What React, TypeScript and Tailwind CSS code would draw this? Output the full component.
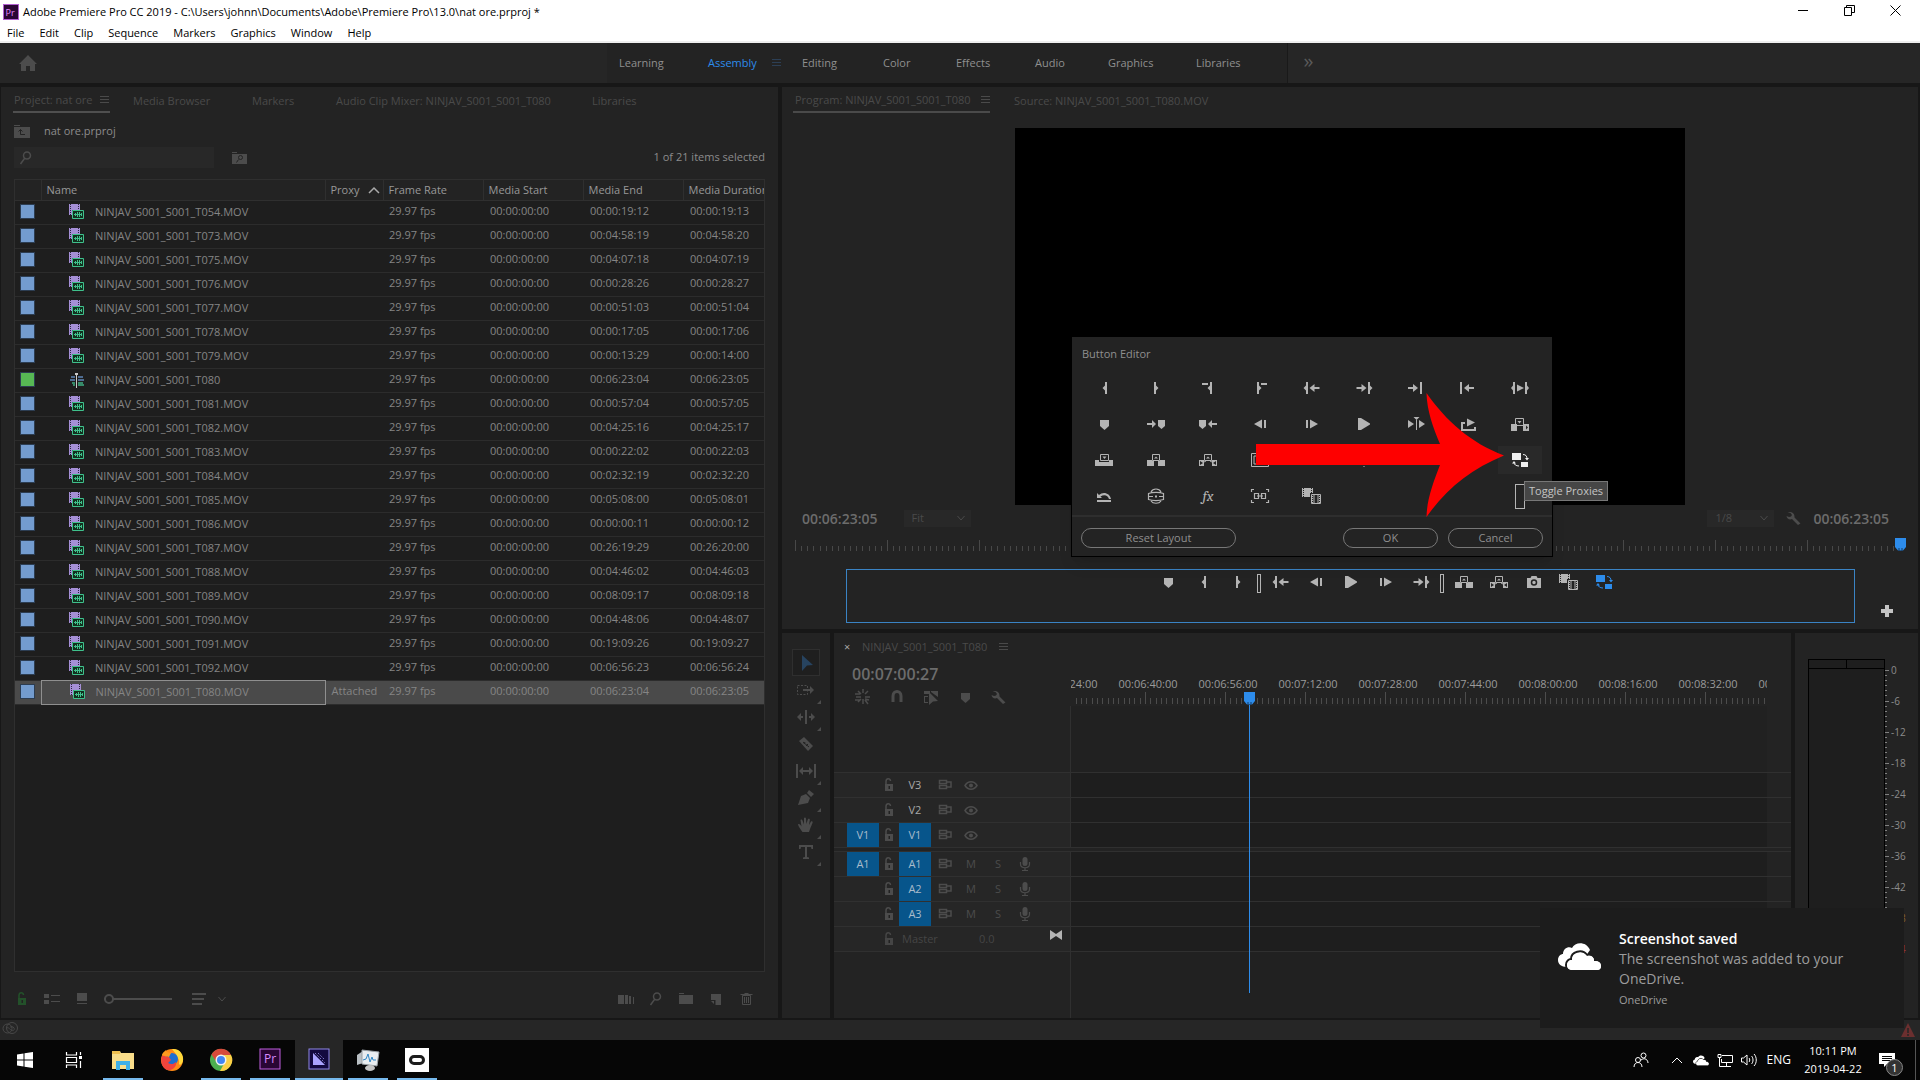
import React from "react";
import clsx from "clsx";

const clips = [
  ["T054.MOV", "00:00:19:12", "00:00:19:13"],
  ["T073.MOV", "00:04:58:19", "00:04:58:20"],
  ["T075.MOV", "00:04:07:18", "00:04:07:19"],
  ["T076.MOV", "00:00:28:26", "00:00:28:27"],
  ["T077.MOV", "00:00:51:03", "00:00:51:04"],
  ["T078.MOV", "00:00:17:05", "00:00:17:06"],
  ["T079.MOV", "00:00:13:29", "00:00:14:00"],
  ["T080", "00:06:23:04", "00:06:23:05"],
  ["T081.MOV", "00:00:57:04", "00:00:57:05"],
  ["T082.MOV", "00:04:25:16", "00:04:25:17"],
  ["T083.MOV", "00:00:22:02", "00:00:22:03"],
  ["T084.MOV", "00:02:32:19", "00:02:32:20"],
  ["T085.MOV", "00:05:08:00", "00:05:08:01"],
  ["T086.MOV", "00:00:00:11", "00:00:00:12"],
  ["T087.MOV", "00:26:19:29", "00:26:20:00"],
  ["T088.MOV", "00:04:46:02", "00:04:46:03"],
  ["T089.MOV", "00:08:09:17", "00:08:09:18"],
  ["T090.MOV", "00:04:48:06", "00:04:48:07"],
  ["T091.MOV", "00:19:09:26", "00:19:09:27"],
  ["T092.MOV", "00:06:56:23", "00:06:56:24"],
  ["T080.MOV", "00:06:23:04", "00:06:23:05"],
];

// Glyphs are drawn on a 20x16 grid, filled with the current colour
const glyphs: Record<string, React.ReactNode> = {
  markIn: <path d="M11 2h2v12h-2v-3.500L8.500 8 11 5.500z" />,
  markOut: <path d="M8 2h2v3.500L12.500 8 10 10.500V14H8z" />,
  splitIn: <path d="M4 3h6v2H4zM12 2h2v12h-2v-3.500L9.500 8 12 5.500z" />,
  splitOut: <path d="M11 3h6v2h-6zM7 2h2v3.500L11.500 8 9 10.500V14H7z" />,
  goIn: <path d="M4 2h2v12H4v-3.500L1.500 8 4 5.500zM7.500 8l5-4v3h5v2h-5v3z" />,
  goOut: <path d="M16 2h-2v12h2v-3.500L18.500 8 16 5.500zM12.500 8l-5-4v3h-5v2h5v3z" />,
  nextEdit: <path d="M12 8L7 4v3H2v2h5v3zM14 2h2v12h-2z" />,
  prevEdit: <path d="M2 2h2v12H2zM6 8l5-4v3h5v2h-5v3z" />,
  playInOut: (
    <path d="M3 2h2v12H3v-3.500L1 8l2-2.500zM7 4.500l7 3.500-7 3.500zM15 2h2v3.500L19 8l-2 2.500V14h-2z" />
  ),
  marker: <path d="M6 4h9v6l-4.500 4L6 10z" />,
  nextMarker: <path d="M10 8L6 4v3H1v2h5v3zM12 4h7v6l-3.500 3L12 10z" />,
  prevMarker: <path d="M1 4h7v6l-3.500 3L1 10zM10 8l4-4v3h5v2h-5v3z" />,
  stepBack: <path d="M4 8l8-4.500v9zM14 4h2v8h-2z" />,
  stepFwd: <path d="M4 4h2v8H4zM8 3.500L16 8l-8 4.500z" />,
  play: <path d="M4 2h3l9 5.500v1L7 14H4z" />,
  playAround: <path d="M2 4l6 4-6 4zM13 4l6 4-6 4zM7.500 1h6l-3 3zM10 4h1v10h-1z" />,
  loop: <path d="M3 6h4v2H5v5h11v-2h2v4H3zM9 2.500l8 4-8 4z" />,
  insert: (
    <>
      <path d="M1 8h6v7H1zM13 8h6v7h-6z" />
      <path d="M5.500 2.500h8v7h-8z" fill="none" stroke="currentColor" />
      <path d="M7.500 5h4l-2 2.500z" />
      <path d="M16 9.500l2 2-2 2z" fill="#232323" />
    </>
  ),
  overwrite: (
    <>
      <path d="M1 8h4v2h10V8h4v6H1z" />
      <path d="M6.500 2.500h8v6h-8z" fill="none" stroke="currentColor" />
      <path d="M8.500 4.500h4l-2 2.500z" />
    </>
  ),
  lift: (
    <>
      <path d="M1 8h5v6H1zM14 8h5v6h-5zM6 9h2v5H6zM12 9h2v5h-2z" />
      <path d="M6.500 2.500h7v6h-7z" fill="none" stroke="currentColor" />
      <path d="M8 6.500h4L10 4.500z" />
    </>
  ),
  extract: (
    <>
      <path d="M1 8h5v6H1zM14 8h5v6h-5z" />
      <path d="M6.500 2.500h7v6h-7zM6 10l2-1M14 10l-2-1" fill="none" stroke="currentColor" />
      <path d="M8 6.500h4L10 4.500z" />
      <path d="M2 9l3 2-3 2zM18 9l-3 2 3 2z" fill="#232323" />
    </>
  ),
  safe: (
    <path d="M1.500 1.500h17v13h-17zM4 4h12v8H4z" fill="none" stroke="currentColor" />
  ),
  caret: <path d="M9 14h2l-1 1z" />,
  proxies: (
    <>
      <path d="M2 1h9v7H2zM11 10h7v5h-7z" />
      <path d="M13 2.500c3 0 4 2 4 4M4 10.500c0 2 2 3.500 5 3.500" fill="none" stroke="currentColor" />
      <path d="M15 6h4l-2 2.500zM2 11.500L4 9l2 2.500z" />
    </>
  ),
  undo: <path d="M3 5v5h5L6.500 8.500C10 6 14 7 15 11h2C16 5 9 3 5 7zM3 12h14v2H3z" />,
  vr: (
    <>
      <path d="M2.500 5.500c4-1.500 11-1.500 15 0v6c-4 1.500-11 1.500-15 0zM5 4c2-4 8-4 10 0M5 13c2 3 8 3 10 0M3 8.500h4M13 8.500h4" fill="none" stroke="currentColor" strokeWidth="1.200" />
      <path d="M9 7.500h2v2H9z" />
    </>
  ),
  link: (
    <path d="M1.500 4V1.500H4M16 1.500h2.500V4M1.500 12v2.500H4M16 14.500h2.500V12M4.500 5.500h4v5h-4zM11.500 5.500h4v5h-4zM7 8h6" fill="none" stroke="currentColor" strokeWidth="1.200" />
  ),
  compare: (
    <>
      <path d="M0 0h11v5H8v4H0z" />
      <path d="M1.500 0v9M9.500 0v5" stroke="#232323" strokeDasharray="1 1" fill="none" />
      <path d="M9.500 6.500h9v9h-9z" fill="none" stroke="currentColor" />
      <path d="M12 6.500v9M16 6.500v9" stroke="currentColor" />
      <path d="M10.500 8v7M17.500 8v7" stroke="currentColor" strokeDasharray="1 1" />
    </>
  ),
  camera: (
    <>
      <path d="M3 4h3.500l1-2h5l1 2H17v10H3z" />
      <circle cx="10" cy="8.500" r="2.500" fill="none" stroke="#232323" strokeWidth="1.500" />
    </>
  ),
  wrench: (
    <path d="M3.500 2.500l3 .5 1.500 2-1 1.500-2 .500-2.500-1C3 9 5.500 10 8 9l6 6 2.500-1.500L10.500 7.500C11 4 8 .5 3.500 2.500z" />
  ),
  chevron: <path d="M6.500 6l3.500 4 3.500-4" fill="none" stroke="currentColor" />,
  lock: (
    <>
      <path d="M6 7h8v7H6z" />
      <path d="M7 7V4.500c0-3.500 4.500-3.500 4.500-.5" fill="none" stroke="currentColor" strokeWidth="1.500" />
      <path d="M9.500 9H11v3H9.500z" fill="#222" />
    </>
  ),
  sync: (
    <path d="M4.500 3.500h7v3h-7zM4.500 8.500h7v3h-7zM12 5h4v5h-4" fill="none" stroke="currentColor" strokeWidth="1.500" />
  ),
  eye: (
    <>
      <path d="M4 8.500c3-5 9-5 12 0-3 5-9 5-12 0z" fill="none" stroke="currentColor" strokeWidth="1.500" />
      <circle cx="10" cy="8.500" r="2" />
    </>
  ),
  mic: (
    <>
      <rect x="7.500" y="1" width="5" height="9" rx="2.500" />
      <path d="M5.500 6v2c0 5 9 5 9 0V6M10 12v2.500M7 14.500h6" fill="none" stroke="currentColor" strokeWidth="1.200" />
    </>
  ),
  search: (
    <path d="M14.500 5.500a3.500 3.500 0 1 1-7 0 3.500 3.500 0 0 1 7 0zM8.500 8.500L4.500 14" fill="none" stroke="currentColor" strokeWidth="1.500" />
  ),
  folder: <path d="M3 2h5v1H3zM3 4h14v9H3z" />,
  folderUp: (
    <>
      <path d="M2 2h6v1H2zM2 4h16v11H2z" />
      <path d="M8.500 6.500v5H13M6.500 8.500l2-2 2 2" fill="none" stroke="#232323" />
    </>
  ),
  folderSearch: (
    <>
      <path d="M2 2h5v1H2zM2 4h15v10H2z" />
      <path d="M12.500 7.500a2 2 0 1 1-4 0 2 2 0 0 1 4 0zM8.500 9.500l-2 3" fill="none" stroke="#232323" />
    </>
  ),
  listView: <path d="M2 3h5v4H2zM9 4h9v1H9zM2 9h5v4H2zM9 10h9v1H9z" />,
  iconView: <path d="M5 2h10v8H5zM5 12h10v1H5z" />,
  sort: <path d="M3 2h14v2H3zM3 7h12v2H3zM3 12h10v2H3z" />,
  automate: <path d="M2 4h6v9H2zM9 4h3v9H9zM13 5h2v8h-2zM17 6h1v7h-1z" />,
  newItem: <path d="M5 3h10v11H9.500V9H5zM5 10h3v3z" />,
  trash: (
    <path d="M6.500 4.500h8v9h-8zM4.500 3.500h12M8.500 2.500h4M8.500 6v6M10.500 6v6M12.500 6v6" fill="none" stroke="currentColor" />
  ),
  hamburger: <path d="M5 4h9v1H5zM5 7h9v1H5zM5 10h9v1H5z" />,
  select: <path d="M6 0l11 10-6 .5L6 16z" />,
  trackSelect: (
    <>
      <path d="M1.500 3.500h10v9h-10z" fill="none" stroke="currentColor" strokeDasharray="2 1.500" />
      <path d="M7 7h7V4l4 4-4 4V9H7z" />
    </>
  ),
  ripple: <path d="M9 1h2v14H9zM7 7v2H5v3L1 8l4-4v3zM13 7v2h2v3l4-4-4-4v3z" />,
  razor: (
    <>
      <path d="M3 5l5-4 9 9-5 5z" />
      <path d="M7 6l6 5M8 8l1-2M10 10l2-2" stroke="#222" fill="none" />
    </>
  ),
  slip: <path d="M0 1h2v14H0zM18 1h2v14h-2zM7 7h6V4l4 4-4 4V9H7v3L3 8l4-4z" />,
  pen: <path d="M2 15l3-9 5-2 4 4-2 5zM11 3l2-3 5 4-3 3z" />,
  hand: (
    <path d="M6.500 15C4 12 2.500 9 2 7.500c1-1 2.500 0 3.500 2L4.500 3c1-1 2 0 2.200 1L8 7.500 8 1c.8-1 1.800-.5 2 .5l.3 5.500L12 2c1-.5 2 0 1.800 1l-.8 5 2-3.500c1.500-.5 2 .5 1.500 1.500L14 12l-1 3z" />
  ),
  type: <path d="M3 1h14v4h-1.500L15 3h-4v10l2 .5V15H7v-1.500l2-.5V3H5l-.5 2H3z" />,
  nest: (
    <path d="M10 0v4M3 8h5M12 8h5M5 2l3 3M15 2l-3 3M5 13l3-3M2 5h5M2 11h5M12 10l4 1M10 10v5M12 11l3 4" fill="none" stroke="currentColor" strokeWidth="1.500" />
  ),
  magnet: (
    <path d="M6 13V7c0-6 8-6 8 0v6" fill="none" stroke="currentColor" strokeWidth="3" />
  ),
  linked: <path d="M3 2h6v3H3zM10 2h7v6l-7-5zM3 7h4v1H4v5h3v1H3zM8 3l9 9-5 .5L8 16z" />,
  collapse: <path d="M4 3l6 4 6-4v10l-6-4-6 4z" />,
  plus: <path d="M8 2h4v4h4v4h-4v4H8v-4H4V6h4z" />,
  home: <path d="M10 0L1 9h2v7h5v-5h4v5h5V9h2z" />,
};

const Glyph = ({ name, className }: { name: string; className?: string }) => (
  <svg viewBox="0 0 20 16" className={clsx("h-4 w-5 shrink-0", className)} fill="currentColor" aria-hidden="true">
    {glyphs[name]}
  </svg>
);

const IconButton = ({ name, label, className }: { name: string; label: string; className?: string }) => (
  <button aria-label={label} className={clsx("flex items-center justify-center", className)}>
    <Glyph name={name} />
  </button>
);

const ClipIcon = () => (
  <svg viewBox="0 0 16 16" className="h-4 w-4 shrink-0" aria-hidden="true">
    <path d="M0 0h11v6H3v5H0z" fill="#a58fd6" />
    <path d="M1.500 0v11M9.500 0v6" stroke="#2b2440" strokeDasharray="1 1" />
    <path d="M3.500 6.500h11v8h-11z" fill="#12301f" stroke="#3fc08c" />
    <path d="M5 10.500h8M6.500 9v3M8.500 8v5M10.500 8v5M12.500 9v3" stroke="#3fc08c" />
  </svg>
);

const SequenceIcon = () => (
  <svg viewBox="0 0 16 16" className="h-4 w-4 shrink-0" aria-hidden="true">
    <path d="M2 5h4M9 5h5M1 8h5M9 8h6" stroke="#5f86b8" strokeWidth="1.500" />
    <path d="M3 11h3M9 11h5M4 13h2M9 13h6" stroke="#3fae83" strokeWidth="1.500" />
    <path d="M7.500 3v13" stroke="#c8c8c8" />
    <path d="M6 1h3v2H6z" fill="#c8c8c8" />
  </svg>
);

const CloudIcon = ({ className, cut }: { className?: string; cut: string }) => (
  <svg viewBox="0 0 44 28" className={className} aria-hidden="true">
    <path d="M9 24C3 24 0 21 0 17c0-4 3-6 5-6 0-5 5-8 9-6 3-6 14-7 18 2L20 24z" fill="#fff" />
    <path d="M15 28c-5 0-7-3-7-6 0-4 3-6 5-6 0-7 11-11 16-4 5-1 8 2 8 5 5 0 7 3 7 6 0 3-2 5-5 5z" fill="#fff" stroke={cut} strokeWidth="2" />
    <path d="M15 27c-4 0-6-2-6-5 0-3 3-5 5-5 0-7 10-10 15-4 4-1 7 1 7 5 4 0 7 2 7 5s-2 4-4 4z" fill="#fff" />
  </svg>
);

const TitleBar = () => (
  <header className="bg-white text-black">
    <div className="flex h-6 items-center pr-0.5 pl-[3px]">
      <svg viewBox="0 0 16 16" className="h-4 w-4">
        <rect x=".5" y=".5" width="15" height="15" fill="#2a0634" stroke="#b15fd0" />
        <text x="2.500" y="11.500" fontSize="9" fill="#e38cff" fontFamily="Open Sans, sans-serif">Pr</text>
      </svg>
      <h1 className="ml-1 flex-1 text-[11px]">
        Adobe Premiere Pro CC 2019 - C:\Users\johnn\Documents\Adobe\Premiere Pro\13.0\nat ore.prproj *
      </h1>
      <div className="flex h-5 items-center self-start">
        <button aria-label="Minimize" className="flex w-[46px] justify-center">
          <svg viewBox="0 0 11 11" className="h-[11px] w-[11px]"><path d="M0 5.500h10" stroke="#000" /></svg>
        </button>
        <button aria-label="Restore" className="flex w-[46px] justify-center">
          <svg viewBox="0 0 11 11" className="h-[11px] w-[11px]">
            <path d="M.5 2.500h7v8h-7zM2.500 2V.5h8v7H8" fill="none" stroke="#000" />
          </svg>
        </button>
        <button aria-label="Close" className="flex w-[46px] justify-center">
          <svg viewBox="0 0 11 11" className="h-[11px] w-[11px]"><path d="M.5.5l10 10M10.500.5l-10 10" stroke="#000" /></svg>
        </button>
      </div>
    </div>
    <nav className="flex h-[19px] gap-[15px] border-b-2 border-[#eee] pl-[7px] text-[11px] leading-4">
      {["File", "Edit", "Clip", "Sequence", "Markers", "Graphics", "Window", "Help"].map((item) => (
        <button key={item}>{item}</button>
      ))}
    </nav>
  </header>
);

const Workspaces = () => (
  <nav className="flex h-10 items-center bg-[#262626] text-[11px] text-[#8f8f8f]">
    <button aria-label="Home" className="ml-[18px] text-[#4c4c4c]">
      <Glyph name="home" />
    </button>
    <div className="ml-[569px] flex h-full items-center border-r border-[#191919] bg-[#232323] pr-[46px]">
      <button className="w-[101px] pl-3 text-left">Learning</button>
      <button className="w-[63px] text-left text-[#2d8ceb]">Assembly</button>
      <Glyph name="hamburger" className="mr-[15px] -ml-1 text-[#2c3f55]" />
      <button className="w-[81px] text-left">Editing</button>
      <button className="w-[73px] text-left">Color</button>
      <button className="w-[79px] text-left">Effects</button>
      <button className="w-[73px] text-left">Audio</button>
      <button className="w-[88px] text-left">Graphics</button>
      <button className="text-left">Libraries</button>
    </div>
    <button aria-label="More workspaces" className="ml-4 pb-1 text-[20px] leading-none text-[#5a5a5a]">»</button>
  </nav>
);

const ProjectPanel = () => (
  <section className="flex min-w-0 flex-col bg-[#232323] px-[13px] text-[11px]">
    <div className="flex h-[26px] pt-0.5 text-[#4a4a4a]">
      <button className="-ml-px flex w-[97px] items-center justify-between border-b-2 border-[#4f4f4f] pl-px">
        Project: nat ore
        <Glyph name="hamburger" className="-mr-[5px]" />
      </button>
      <button className="ml-[23px] w-[119px] text-left">Media Browser</button>
      <button className="w-[84px] text-left">Markers</button>
      <button className="w-[256px] text-left">Audio Clip Mixer: NINJAV_S001_S001_T080</button>
      <button>Libraries</button>
    </div>
    <div className="mt-[7px] flex h-[22px] items-center text-[#8c8c8c]">
      <Glyph name="folderUp" className="-ml-0.5 text-[#4c4c4c]" />
      <span className="ml-3">nat ore.prproj</span>
    </div>
    <div className="mt-[5px] flex h-[21px] items-center">
      <label className="flex h-full w-[200px] items-center bg-[#282828] pl-0.5 text-[#4c4c4c]">
        <Glyph name="search" />
        <input aria-label="Search project" className="w-full bg-transparent outline-none" />
      </label>
      <IconButton name="folderSearch" label="New search bin" className="ml-4 text-[#4c4c4c]" />
      <span className="ml-auto text-[#8c8c8c]">1 of 21 items selected</span>
    </div>
    <div className="mt-[11px] flex-1 overflow-hidden border border-[#2f2f2f] bg-[#1e1e1e]">
      <table className="w-full table-fixed border-collapse text-left text-[#858585]">
        <colgroup>
          <col className="w-[26px]" />
          <col />
          <col className="w-[58px]" />
          <col className="w-[100px]" />
          <col className="w-[100px]" />
          <col className="w-[100px]" />
          <col className="w-[81px]" />
        </colgroup>
        <thead className="bg-[#232323] text-[#989898]">
          <tr className="h-5 border-b border-[#2f2f2f]">
            <th />
            <th className="border-l border-[#2f2f2f] pl-[5px] font-normal">Name</th>
            <th className="border-l border-[#2f2f2f] pl-[5px] font-normal">
              <span className="flex items-center justify-between">
                Proxy
                <svg viewBox="0 0 12 8" className="mr-[3px] h-2 w-3"><path d="M1 7l5-5 5 5" fill="none" stroke="#aaa" strokeWidth="1.500" /></svg>
              </span>
            </th>
            <th className="border-l border-[#2f2f2f] pl-[5px] font-normal">Frame Rate</th>
            <th className="border-l border-[#2f2f2f] pl-[5px] font-normal">Media Start</th>
            <th className="border-l border-[#2f2f2f] pl-[5px] font-normal">Media End</th>
            <th className="overflow-hidden border-l border-[#2f2f2f] pl-[5px] font-normal whitespace-nowrap">Media Duration</th>
          </tr>
        </thead>
        <tbody>
          {clips.map(([name, end, duration], i) => {
            const selected = i === clips.length - 1;
            const sequence = name === "T080";
            return (
              <tr key={i} className={clsx("h-6 border-b border-[#2c2c2c]", selected && "bg-[#4a4a4a]")}>
                <td className="pb-0.5 pl-[5px]">
                  <div className={clsx("h-[15px] w-[15px] border border-[#2c3d52]", sequence ? "bg-[#57b854]" : "bg-[#739ccf]")} />
                </td>
                <td className={clsx(selected && "border border-[#8f8f8f]")}>
                  <div className="flex items-center pl-[28px]">
                    {sequence ? <SequenceIcon /> : <ClipIcon />}
                    <span className="ml-[10px]">NINJAV_S001_S001_{name}</span>
                  </div>
                </td>
                <td className="pb-0.5 pl-[6px]">{selected && "Attached"}</td>
                <td className="pb-0.5 pl-[6px]">29.97 fps</td>
                <td className="pb-0.5 pl-[7px]">00:00:00:00</td>
                <td className="pb-0.5 pl-[7px]">{end}</td>
                <td className="pb-0.5 pl-[7px]">{duration}</td>
              </tr>
            );
          })}
        </tbody>
      </table>
    </div>
    <div className="flex h-[46px] items-center pt-[7px] text-[#4c4c4c]">
      <IconButton name="lock" label="Toggle project lock" className="-ml-0.5 text-[#23512a]" />
      <IconButton name="listView" label="List view" className="ml-[10px]" />
      <IconButton name="iconView" label="Icon view" className="ml-[10px]" />
      <input
        type="range"
        aria-label="Zoom"
        defaultValue={0}
        className="ml-3 h-[10px] w-[68px] appearance-none bg-transparent [&::-webkit-slider-runnable-track]:h-[10px] [&::-webkit-slider-runnable-track]:bg-[linear-gradient(transparent_4px,#4c4c4c_4px,#4c4c4c_6px,transparent_6px)] [&::-webkit-slider-thumb]:h-[10px] [&::-webkit-slider-thumb]:w-[10px] [&::-webkit-slider-thumb]:appearance-none [&::-webkit-slider-thumb]:rounded-full [&::-webkit-slider-thumb]:border-2 [&::-webkit-slider-thumb]:border-[#4c4c4c] [&::-webkit-slider-thumb]:bg-[#232323]"
      />
      <IconButton name="sort" label="Sort icons" className="ml-[17px]" />
      <Glyph name="chevron" className="ml-[3px]" />
      <div className="mr-[9px] ml-auto flex gap-[10px]">
        <IconButton name="automate" label="Automate to sequence" />
        <IconButton name="search" label="Find" />
        <IconButton name="folder" label="New bin" />
        <IconButton name="newItem" label="New item" />
        <IconButton name="trash" label="Clear" />
      </div>
    </div>
  </section>
);

const editorButtons = [
  "markIn", "markOut", "splitIn", "splitOut", "goIn", "goOut", "nextEdit", "prevEdit", "playInOut",
  "marker", "nextMarker", "prevMarker", "stepBack", "stepFwd", "play", "playAround", "loop", "insert",
  "overwrite", "lift", "extract", "safe", "", "caret", "", "", "proxies",
  "undo", "vr", "fx", "link", "compare", "", "", "", "spacer",
];

const ButtonEditor = () => (
  <div role="dialog" aria-label="Button Editor" className="absolute top-[249px] left-[289px] w-[482px] border border-black bg-[#232323] text-[11px] text-[#8f8f8f] shadow-lg">
    <h2 className="h-8 pt-[9px] pl-[10px]">Button Editor</h2>
    <div className="grid grid-cols-9 px-[6px] pt-px text-[#b4b4b4]">
      {editorButtons.map((name, i) => (
        <div key={i} className="flex h-[36px] items-center justify-center">
          {name === "fx" && <button className="font-serif text-[15px] leading-none italic">fx</button>}
          {name === "spacer" && <button aria-label="Space" className="h-[25px] w-[10px] border border-[#b4b4b4]" />}
          {name && name !== "fx" && name !== "spacer" && (
            <IconButton name={name} label={name} className={clsx("h-7 w-11", name === "proxies" && "bg-[#292929] text-[#f0f0f0]")} />
          )}
        </div>
      ))}
    </div>
    <div className="mt-px flex h-[41px] items-center gap-[10px] border-t-2 border-[#2e2e2e] px-[9px] pt-[3px]">
      <button className="mr-auto h-5 w-[155px] rounded-full border border-[#777]">Reset Layout</button>
      <button className="h-5 w-[95px] rounded-full border border-[#777]">OK</button>
      <button className="h-5 w-[95px] rounded-full border border-[#777]">Cancel</button>
    </div>
    <svg viewBox="0 0 248 126" className="absolute top-[56px] left-[184px] h-[126px] w-[248px]" aria-hidden="true">
      <path d="M0 51h184C177 34 171 18 170.500 0 190 28 215 50 248 62.500 215 76 190 96 170.500 124 171 106 177 90 184 72H0z" fill="#fe0000" />
    </svg>
    <div role="tooltip" className="absolute top-[144px] left-[452px] flex h-5 items-center border border-[#777] bg-[#464646] px-1 whitespace-nowrap text-[#c4c4c4]">
      Toggle Proxies
    </div>
  </div>
);

const transport = [
  "marker", "markIn", "markOut", "|", "goIn", "stepBack", "play", "stepFwd", "goOut", "|",
  "lift", "extract", "camera", "compare", "proxies",
];

const Dropdown = ({ label, value, className }: { label: string; value: string; className?: string }) => (
  <div className={clsx("flex h-[17px] items-center bg-[#282828] text-[11px] text-[#4a4a4a]", className)}>
    <select aria-label={label} className="min-w-0 flex-1 appearance-none bg-transparent pl-2 outline-none">
      <option>{value}</option>
    </select>
    <Glyph name="chevron" />
  </div>
);

const Playhead = () => (
  <svg viewBox="0 0 12 13" className="h-[13px] w-3" aria-hidden="true">
    <path d="M0 0h11v9l-3 3.500H3L0 9z" fill="#2d8ceb" />
    <path d="M4 13v-3M7 13v-3" stroke="#123c66" />
  </svg>
);

const ProgramPanel = () => (
  <section className="relative bg-[#232323] pb-[6px] text-[11px]">
    <div className="flex h-[26px] pt-0.5 text-[#4a4a4a]">
      <button className="ml-[11px] flex w-[197px] items-center justify-between border-b-2 border-[#4a4a4a] pl-0.5">
        Program: NINJAV_S001_S001_T080
        <Glyph name="hamburger" className="-mr-[6px]" />
      </button>
      <button className="ml-6">Source: NINJAV_S001_S001_T080.MOV</button>
    </div>
    <div className="mx-auto mt-[15px] aspect-video w-[59%] bg-black" />
    <div className="flex h-[26px] items-center pr-[29px] pl-5 text-[14px] font-semibold text-[#6c6c6c]">
      <span>00:06:23:05</span>
      <Dropdown label="Zoom level" value="Fit" className="ml-[26px] w-[67px] font-normal" />
      <Dropdown label="Playback resolution" value="1/8" className="ml-auto w-[67px] font-normal" />
      <Glyph name="wrench" className="mr-[9px] ml-[10px] text-[#4c4c4c]" />
      <span>00:06:23:05</span>
    </div>
    <div className="mt-[7px] flex h-[13px] pl-[13px]">
      <svg className="h-full min-w-0 flex-1" shapeRendering="crispEdges" aria-hidden="true">
        <pattern id="monitorTicks" width="92" height="13" patternUnits="userSpaceOnUse">
          {[...Array(15)].map((_, i) => (
            <path key={i} d={i ? "M0 8v5" : "M0 2v11"} transform={`translate(${Math.round(i * 6.13) + 0.5} 0)`} stroke="#484848" />
          ))}
        </pattern>
        <rect width="100%" height="13" fill="url(#monitorTicks)" />
      </svg>
      <div className="mr-[11px]"><Playhead /></div>
    </div>
    <div className="mt-[18px] flex items-end pl-16">
      <div className="flex h-[54px] flex-1 items-start justify-center border border-[#3a83c4] pt-1 pl-[70px] text-[#b4b4b4]">
        {transport.map((name, i) =>
          name === "|" ? (
            <div key={i} className="flex w-2 justify-center">
              <div className="h-[19px] w-1 border border-[#b4b4b4]" />
            </div>
          ) : (
            <IconButton key={i} name={name} label={name} className={clsx("w-[35px]", name === "proxies" && "text-[#2d8ceb]")} />
          )
        )}
      </div>
      <IconButton name="plus" label="Button editor" className="w-[63px] pb-1 text-[#c4c4c4]" />
    </div>
    <ButtonEditor />
  </section>
);

const tools = ["select", "trackSelect", "ripple", "razor", "slip", "pen", "hand", "type"];

const Tools = () => (
  <aside className="flex w-12 flex-col items-center bg-[#232323] pt-4 text-[#4c4c4c]">
    {tools.map((tool) => (
      <button
        key={tool}
        aria-label={tool}
        className={clsx("relative flex h-[27px] w-7 items-center justify-center border", tool === "select" ? "border-[#2f2f2f] bg-[#1f1f1f] text-[#27435f]" : "border-transparent")}
      >
        <Glyph name={tool} />
        {tool !== "select" && tool !== "razor" && (
          <svg viewBox="0 0 4 4" className="absolute -right-0.5 -bottom-0.5 h-1 w-1" fill="currentColor"><path d="M4 0v4H0z" /></svg>
        )}
      </button>
    ))}
  </aside>
);

const Track = ({ id, source }: { id: string; source?: boolean }) => {
  const audio = id[0] === "A";
  const on = audio || id === "V1";
  return (
    <div className="flex h-[25px] border-t border-[#303030] text-[11px] text-[#4c4c4c]">
      <div className="flex w-[236px] items-center bg-[#262626] pl-[13px]">
        <button className={clsx("h-full w-8", source && "bg-[#07558b] text-[#a9bccb]")}>{source && id}</button>
        <Glyph name="lock" />
        <button className={clsx("h-full w-8", on ? "bg-[#07558b] text-[#a9bccb]" : "text-[#a8a8a8]")}>{id}</button>
        <Glyph name="sync" className="ml-1" />
        {audio ? (
          <>
            <button className="ml-[6px] w-5">M</button>
            <button className="ml-[7px] w-5">S</button>
            <Glyph name="mic" className="ml-[7px]" />
          </>
        ) : (
          <Glyph name="eye" className="ml-[6px]" />
        )}
      </div>
      <div className="mr-6 flex-1 border-l border-[#303030] bg-[#1e1e1e]" />
    </div>
  );
};

const rulerLabels = [
  "00:06:24:00", "00:06:40:00", "00:06:56:00", "00:07:12:00", "00:07:28:00",
  "00:07:44:00", "00:08:00:00", "00:08:16:00", "00:08:32:00", "00:08:48:00",
];

const Timeline = () => (
  <section className="relative flex min-w-0 flex-1 flex-col bg-[#232323] text-[11px]">
    <div className="flex h-[73px]">
      <div className="w-[237px] shrink-0">
        <div className="flex h-7 items-center pl-[10px] text-[#4a4a4a]">
          <button aria-label="Close sequence" className="w-[18px] text-left text-[#a8a8a8]">×</button>
          <span>NINJAV_S001_S001_T080</span>
          <Glyph name="hamburger" className="ml-[7px]" />
        </div>
        <div className="flex h-[26px] items-center pl-[18px] text-[16px] font-semibold text-[#6c6c6c]">00:07:00:27</div>
        <div className="flex h-[19px] items-center gap-[14px] pl-[19px] text-[#4c4c4c]">
          <IconButton name="nest" label="Insert as nest" />
          <IconButton name="magnet" label="Snap" />
          <IconButton name="linked" label="Linked selection" />
          <IconButton name="marker" label="Add marker" />
          <IconButton name="wrench" label="Timeline settings" />
        </div>
      </div>
      <div className="mr-6 flex min-w-0 flex-1 flex-col justify-end overflow-hidden pb-0.5">
        <div className="-ml-[43px] flex h-[13px] items-center text-[#9a9a9a]">
          {rulerLabels.map((label) => (
            <span key={label} className="w-20 shrink-0 text-center">{label}</span>
          ))}
        </div>
        <svg className="h-[13px] w-full" shapeRendering="crispEdges" aria-hidden="true">
          <pattern id="timelineTicks" x="74" width="80" height="13" patternUnits="userSpaceOnUse">
            {[...Array(15)].map((_, i) => (
              <path key={i} d={i ? "M0 7v6" : "M0 1v12"} transform={`translate(${Math.round(i * 5.33) + 0.5} 0)`} stroke="#4c4c4c" />
            ))}
          </pattern>
          <rect width="100%" height="13" fill="url(#timelineTicks)" />
        </svg>
      </div>
    </div>
    <div className="mr-6 ml-[236px] h-[66px] border-l border-[#303030] bg-[#212121]" />
    <Track id="V3" />
    <Track id="V2" />
    <Track id="V1" source />
    <div className="h-1 border-t border-[#303030]" />
    <Track id="A1" source />
    <Track id="A2" />
    <Track id="A3" />
    <div className="flex h-[26px] border-y border-[#303030] text-[#454545]">
      <div className="flex w-[236px] items-center bg-[#262626] pl-[45px]">
        <Glyph name="lock" />
        <span className="ml-[3px] w-[77px]">Master</span>
        <span>0.0</span>
        <Glyph name="collapse" className="mr-1 mb-2 ml-auto text-[#b4b4b4]" />
      </div>
      <div className="mr-6 flex-1 border-l border-[#303030] bg-[#1e1e1e]" />
    </div>
    <div className="mr-6 ml-[236px] flex-1 border-l border-[#303030] bg-[#212121]" />
    <div className="absolute top-[59px] bottom-[25px] left-[410px] flex w-3 flex-col">
      <Playhead />
      <div className="ml-[5px] w-px flex-1 bg-[#2d8ceb]" />
    </div>
  </section>
);

const levels = ["0", "-6", "-12", "-18", "-24", "-30", "-36", "-42", "-48", "-54"];

const Meters = () => (
  <section aria-label="Audio meters" className="flex w-[123px] items-stretch bg-[#232323] pt-[26px] pb-3 pl-[13px]">
    <div className="flex w-[77px] flex-col border border-black bg-[#1e1e1e]">
      <div className="flex h-[9px] border-b border-black">
        <div className="w-1/2 border-r border-black" />
      </div>
    </div>
    <div className="mt-[11px]">
      {levels.map((level) => (
        <div key={level} className="flex h-[31px] items-start">
          <svg viewBox="0 0 4 31" className="h-[31px] w-1" shapeRendering="crispEdges">
            <path d="M0 .5h4M0 5.500h2M0 10.500h2M0 15.500h2M0 20.500h2M0 25.500h2" stroke="#808080" />
          </svg>
          <span className={clsx("-mt-[6px] ml-0.5 text-[10px] leading-3", level === "-48" ? "text-[#8a6a30]" : level === "-54" ? "text-[#8a3434]" : "text-[#8c8c8c]")}>
            {level}
          </span>
        </div>
      ))}
    </div>
  </section>
);

const StatusBar = () => (
  <footer className="flex h-5 items-center justify-between bg-[#262626] pr-[5px] pl-0.5">
    <svg viewBox="0 0 16 12" className="mb-1 h-3 w-4" fill="none" stroke="#484848" aria-hidden="true">
      <circle cx="5.500" cy="6.500" r="4.500" />
      <circle cx="10" cy="6" r="5.500" />
      <path d="M4 6.500c2-2 3 0 5 1.500s4 0 3-2-3-1-4-1" />
    </svg>
    <svg viewBox="0 0 14 14" className="h-[14px] w-[14px]" aria-hidden="true">
      <path d="M7 0l7 14H0z" fill="#6b2f2f" />
      <path d="M7 5v5M7 11v2" stroke="#262626" strokeWidth="1.500" />
    </svg>
  </footer>
);

const Toast = () => (
  <div role="alert" className="absolute right-4 bottom-[52px] flex h-[120px] w-[364px] bg-[#1c1c1c]">
    <CloudIcon className="mt-[35px] ml-[18px] h-7 w-11" cut="#1c1c1c" />
    <div className="mt-[21px] ml-[17px] w-[240px] text-[14px] leading-5 text-[#9c9c9c]">
      <p className="font-semibold text-white">Screenshot saved</p>
      <p>The screenshot was added to your OneDrive.</p>
      <p className="text-[11px] leading-[22px]">OneDrive</p>
    </div>
  </div>
);

const taskIcons: { label: string; running?: boolean; active?: boolean; art: React.ReactNode }[] = [
  {
    label: "Start",
    art: <path d="M4 6.500l6.500-1v6H4zM11.500 5.300L20 4v7.500h-8.500zM4 12.500h6.500v6L4 17.500zM11.500 12.500H20V20l-8.500-1.300z" fill="#fff" />,
  },
  {
    label: "Task view",
    art: (
      <>
        <path d="M4.500 4v3h10V4M4.500 20v-3h10v3M4.500 9.500h10v5h-10zM18.500 4v3M18.500 13v7" fill="none" stroke="#fff" strokeWidth="1.200" />
        <path d="M17 8h3v3h-3z" fill="#fff" />
      </>
    ),
  },
  {
    label: "File Explorer",
    running: true,
    art: (
      <>
        <path d="M1 3h8l1 2h13v16H1z" fill="#f9dd8a" />
        <path d="M1 3h8v3H1z" fill="#f0c04f" />
        <path d="M5 13h14v9h-4v-5H9v5H5z" fill="#3fb0e8" />
      </>
    ),
  },
  {
    label: "Firefox",
    art: (
      <>
        <circle cx="12" cy="12" r="11" fill="#ff8a16" />
        <path d="M12 1c8-1 12 6 11 12-1 3-3 5-4 3 1-6-3-7-3-10z" fill="#ffd93b" />
        <circle cx="12" cy="11" r="6" fill="#1e6fd0" />
        <path d="M2 8c2-1 4 1 7 1l2 3-3 3c3 2 6 1 8-1 1 5-4 9-9 8C2 20 0 13 2 8z" fill="#f2443c" />
        <path d="M2 7c1-3 2-3 4-5 0 2 2 3 5 3L9 9z" fill="#ff9a1f" />
      </>
    ),
  },
  {
    label: "Chrome",
    running: true,
    art: (
      <>
        <circle cx="12" cy="12" r="11" fill="#4caf50" />
        <path d="M2.500 6.500A11 11 0 0 1 22 7H12L7.500 14z" fill="#d64a3b" />
        <path d="M22 7a11 11 0 0 1-11 16l5-9-1-7z" fill="#fbcf46" />
        <circle cx="12" cy="12" r="5.500" fill="#f2f2f2" />
        <circle cx="12" cy="12" r="4" fill="#4285f4" />
      </>
    ),
  },
  {
    label: "Premiere Pro",
    running: true,
    art: (
      <>
        <rect x="2" y="1" width="20" height="20" fill="#2a0634" stroke="#c05fe0" />
        <text x="6" y="15" fontSize="12" fill="#d88cff" fontFamily="Open Sans, sans-serif">Pr</text>
      </>
    ),
  },
  {
    label: "Media Encoder",
    running: true,
    active: true,
    art: (
      <>
        <rect x="2" y="1" width="20" height="20" fill="#12093f" stroke="#8f88e8" />
        <path d="M6 5l12 12H6z" fill="#a9a3ff" />
        <path d="M8 5l10 10M11 5l7 7" stroke="#a9a3ff" strokeDasharray="1 1.500" />
      </>
    ),
  },
  {
    label: "Performance Monitor",
    running: true,
    art: (
      <>
        <path d="M1 7l6-4v12l-6 2z" fill="#b9bfc4" />
        <path d="M6 2l17 2-2 14-15-2z" fill="#e9edf0" stroke="#9aa1a6" />
        <path d="M7 12l3-1 2-5 2 8 2-5 1 3h3" fill="none" stroke="#2f86c5" />
        <ellipse cx="14" cy="20" rx="5" ry="3" fill="#c4c4c4" />
      </>
    ),
  },
  {
    label: "Oculus",
    running: true,
    art: (
      <>
        <path d="M0 0h24v24H0z" fill="#fff" />
        <rect x="5.500" y="8.500" width="13" height="7" rx="3.500" fill="none" stroke="#1c1c1c" strokeWidth="3" />
      </>
    ),
  },
];

const Taskbar = () => (
  <div className="flex h-10 items-center bg-[#060606] pr-1 text-[12px] text-white">
    <div className="flex h-full gap-px pl-px">
      {taskIcons.map(({ label, running, active, art }) => (
        <button key={label} aria-label={label} className={clsx("flex h-full w-12 flex-col items-center justify-end", active && "bg-[#262626]")}>
          <svg viewBox="0 0 24 24" className="mb-1.5 h-6 w-6">{art}</svg>
          <span className={clsx("h-0.5", running && "bg-[#76b9ed]", active ? "w-12" : "w-10")} />
        </button>
      ))}
    </div>
    <div className="ml-auto flex h-full items-center">
      <svg viewBox="0 0 16 16" className="h-4 w-4" fill="none" stroke="#fff" aria-label="People">
        <circle cx="10.500" cy="3.500" r="2.500" />
        <circle cx="5" cy="8" r="2.500" />
        <path d="M1 15c0-6 8-6 8 0M8 8c4-3 7 0 7 3" />
      </svg>
      <svg viewBox="0 0 12 8" className="ml-[22px] h-2 w-3" fill="none" stroke="#fff"><path d="M1 7l5-5 5 5" /></svg>
      <CloudIcon className="ml-[10px] h-[11px] w-4" cut="#060606" />
      <svg viewBox="0 0 16 14" className="ml-2 h-[14px] w-4" fill="none" stroke="#fff">
        <path d="M5 2.500h10.500v7H4.500V6M1 1.500h3v3H1zM2.500 5v8.500H14M9.500 10v3" />
      </svg>
      <svg viewBox="0 0 16 14" className="ml-2 h-[14px] w-4" fill="none" stroke="#fff">
        <path d="M.5 5h2l3.500-3v10L2.500 9h-2zM8 5c1 1 1 3 0 4M10.500 3c2 2 2 6 0 8M13 1c3 3 3 9 0 12" />
      </svg>
      <span className="ml-[10px]">ENG</span>
      <div className="ml-3 w-[60px] text-center text-[11px] leading-[18px]">
        <p>10:11 PM</p>
        <p>2019-04-22</p>
      </div>
      <button aria-label="Notifications" className="relative mr-[20px] ml-[16px] h-4 w-4">
        <svg viewBox="0 0 16 16" className="h-4 w-4">
          <path d="M0 1h16v11h-8l-3 3v-3H0z" fill="#fff" />
          <path d="M3 4.500h10M3 6.500h10M3 8.500h8" stroke="#060606" />
        </svg>
        <span className="absolute top-[7px] left-[7px] flex h-[17px] w-[17px] items-center justify-center rounded-full border border-[#888] bg-[#333] text-[11px] leading-none">1</span>
      </button>
      <div className="h-full w-px bg-[#555]" />
    </div>
  </div>
);

export default function App() {
  return (
    <div className="relative flex min-h-screen flex-col bg-[#171717]" style={{ fontFamily: "'Open Sans', sans-serif" }}>
      <TitleBar />
      <Workspaces />
      <main className="grid flex-1 grid-cols-[777fr_1136fr] gap-1 pt-1 pr-0.5 pb-0.5 pl-px">
        <ProjectPanel />
        <div className="flex min-w-0 flex-col gap-1">
          <ProgramPanel />
          <div className="flex flex-1 gap-1">
            <Tools />
            <Timeline />
            <Meters />
          </div>
        </div>
      </main>
      <StatusBar />
      <Taskbar />
      <Toast />
    </div>
  );
}
